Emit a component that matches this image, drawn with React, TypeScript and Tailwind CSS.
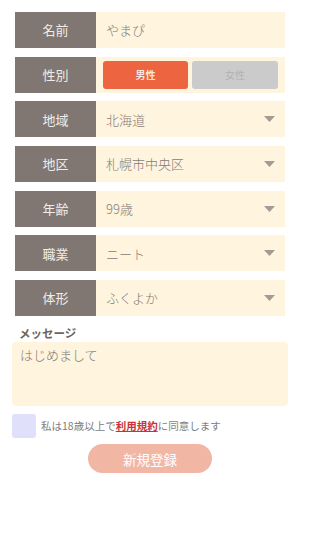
import { useState } from "react";

const font = { fontFamily: '"Noto Sans CJK JP", "Noto Sans", sans-serif' };

const selects = [
  { label: "地域", value: "北海道" },
  { label: "地区", value: "札幌市中央区" },
  { label: "年齢", value: "99歳" },
  { label: "職業", value: "ニート" },
  { label: "体形", value: "ふくよか" },
];

const Label = ({ children }: { children: string }) => (
  <div className="w-[81px] shrink-0 flex items-center justify-center bg-[#807772] text-[13px] text-[#f1ece8]">
    {children}
  </div>
);

const Caret = () => (
  <svg width="11" height="6" viewBox="0 0 11 6" className="shrink-0">
    <path d="M0 0h11L5.5 6z" fill="#a39b95" />
  </svg>
);

export default function App() {
  const [gender, setGender] = useState("male");

  return (
    <div className="w-[300px] h-[534px] bg-white" style={font}>
      <div className="pt-[12px] px-[15px] flex flex-col gap-[8.7px]">
        <div className="flex h-[36px]">
          <Label>名前</Label>
          <div className="flex-1 flex items-center pl-[10px] bg-[#fff4dd] text-[13px] font-light text-[#857c77]">
            やまぴ
          </div>
        </div>

        <div className="flex h-[36px]">
          <Label>性別</Label>
          <div className="flex-1 flex items-center gap-[4px] px-[7px] bg-[#fff4dd]">
            <button
              onClick={() => setGender("male")}
              className={`w-[85px] h-[28px] rounded-[3px] text-[10px] font-bold ${
                gender === "male" ? "bg-[#ec6440] text-[#fbe4dc]" : "bg-[#cbcbcb] text-[#b3b3b3]"
              }`}
            >
              男性
            </button>
            <button
              onClick={() => setGender("female")}
              className={`w-[86px] h-[28px] rounded-[3px] text-[10px] ${
                gender === "female" ? "bg-[#ec6440] text-[#fbe4dc] font-bold" : "bg-[#cbcbcb] text-[#b3b3b3]"
              }`}
            >
              女性
            </button>
          </div>
        </div>

        {selects.map((s) => (
          <div key={s.label} className="flex h-[36px]">
            <Label>{s.label}</Label>
            <div className="flex-1 flex items-center justify-between px-[10px] bg-[#fff4dd] text-[13px] font-light text-[#857c77]">
              <span>{s.value}</span>
              <Caret />
            </div>
          </div>
        ))}
      </div>

      <div className="px-[12px]">
        <div className="mt-[9px] pl-[7px] text-[11.5px] font-bold text-[#6d6460] leading-[16px]">
          メッセージ
        </div>
        <div className="mt-[1px] h-[64px] rounded-[4px] bg-[#fff4dd] px-[8px] pt-[3px] text-[13px] font-light text-[#857c77] leading-[20px]">
          はじめまして
        </div>

        <div className="mt-[8px] flex items-center gap-[5px]">
          <div className="w-[24px] h-[24px] rounded-[3px] bg-[#e1e0fb]" />
          <span className="text-[10.5px] text-[#7e7e7e]">
            私は18歳以上で
            <span className="text-[#c8323a] underline font-bold">利用規約</span>
            に同意します
          </span>
        </div>

        <div className="mt-[6px] flex justify-center">
          <button className="w-[124px] h-[29px] rounded-full bg-[#f2b6a5] text-[13.5px] text-white">
            新規登録
          </button>
        </div>
      </div>
    </div>
  );
}
